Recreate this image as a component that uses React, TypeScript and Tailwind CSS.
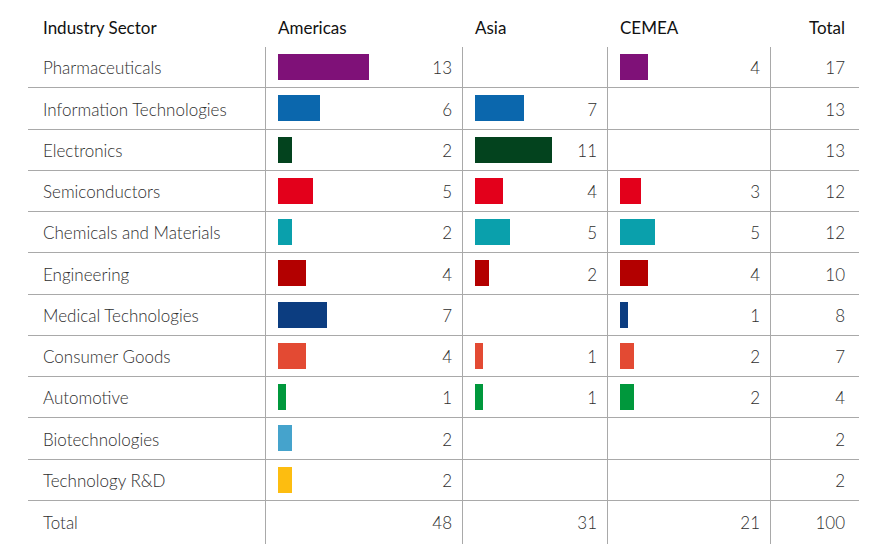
type Row = {
  name: string
  color: string
  am: number | null
  as: number | null
  ce: number | null
  total: number
}

const rows: Row[] = [
  { name: "Pharmaceuticals", color: "#7f1178", am: 13, as: null, ce: 4, total: 17 },
  { name: "Information Technologies", color: "#0b67ad", am: 6, as: 7, ce: null, total: 13 },
  { name: "Electronics", color: "#03431e", am: 2, as: 11, ce: null, total: 13 },
  { name: "Semiconductors", color: "#e3001b", am: 5, as: 4, ce: 3, total: 12 },
  { name: "Chemicals and Materials", color: "#0aa0ac", am: 2, as: 5, ce: 5, total: 12 },
  { name: "Engineering", color: "#b30000", am: 4, as: 2, ce: 4, total: 10 },
  { name: "Medical Technologies", color: "#0c3d80", am: 7, as: null, ce: 1, total: 8 },
  { name: "Consumer Goods", color: "#e34a33", am: 4, as: 1, ce: 2, total: 7 },
  { name: "Automotive", color: "#00983c", am: 1, as: 1, ce: 2, total: 4 },
  { name: "Biotechnologies", color: "#45a3cc", am: 2, as: null, ce: null, total: 2 },
  { name: "Technology R&D", color: "#fdbd10", am: 2, as: null, ce: null, total: 2 },
]

function BarCell({ value, color, width }: { value: number | null; color: string; width: string }) {
  return (
    <div className={`${width} h-full flex items-center border-l border-[#a9a9a9] pl-[12px] pr-[10px]`}>
      {value !== null && (
        <>
          <div
            className="h-[26px] shrink-0"
            style={{ width: Math.max(8, Math.round(value * 7)), backgroundColor: color }}
          />
          <span className="ml-auto pt-[2px]">{value}</span>
        </>
      )}
    </div>
  )
}

export default function App() {
  return (
    <div
      className="w-[887px] h-[553px] bg-white text-[17px] font-light text-[#2e2e2e]"
      style={{ fontFamily: "Lato, 'Liberation Sans', sans-serif" }}
    >
      <div className="ml-[28px] w-[831px]">
        {/* header */}
        <div className="flex h-[47px] pt-[18px] leading-[20px] font-normal text-[#111]">
          <div className="w-[237px] pl-[15px]">Industry Sector</div>
          <div className="w-[197px] pl-[13px]">Americas</div>
          <div className="w-[145px] pl-[13px]">Asia</div>
          <div className="w-[163px] pl-[13px]">CEMEA</div>
          <div className="w-[89px] pr-[14px] text-right">Total</div>
        </div>

        {rows.map((r) => (
          <div key={r.name} className="flex h-[41.25px] border-b border-[#a9a9a9]">
            <div className="w-[237px] pl-[15px] pt-[2px] flex items-center">{r.name}</div>
            <BarCell value={r.am} color={r.color} width="w-[197px]" />
            <BarCell value={r.as} color={r.color} width="w-[145px]" />
            <BarCell value={r.ce} color={r.color} width="w-[163px]" />
            <div className="w-[89px] h-full flex items-center justify-end border-l border-[#a9a9a9] pr-[14px] pt-[2px]">
              {r.total}
            </div>
          </div>
        ))}

        {/* totals */}
        <div className="flex h-[43px]">
          <div className="w-[237px] pl-[15px] flex items-center">Total</div>
          <div className="w-[197px] flex items-center justify-end border-l border-[#a9a9a9] pr-[10px]">48</div>
          <div className="w-[145px] flex items-center justify-end border-l border-[#a9a9a9] pr-[10px]">31</div>
          <div className="w-[163px] flex items-center justify-end border-l border-[#a9a9a9] pr-[10px]">21</div>
          <div className="w-[89px] flex items-center justify-end border-l border-[#a9a9a9] pr-[14px]">100</div>
        </div>
      </div>
    </div>
  )
}
